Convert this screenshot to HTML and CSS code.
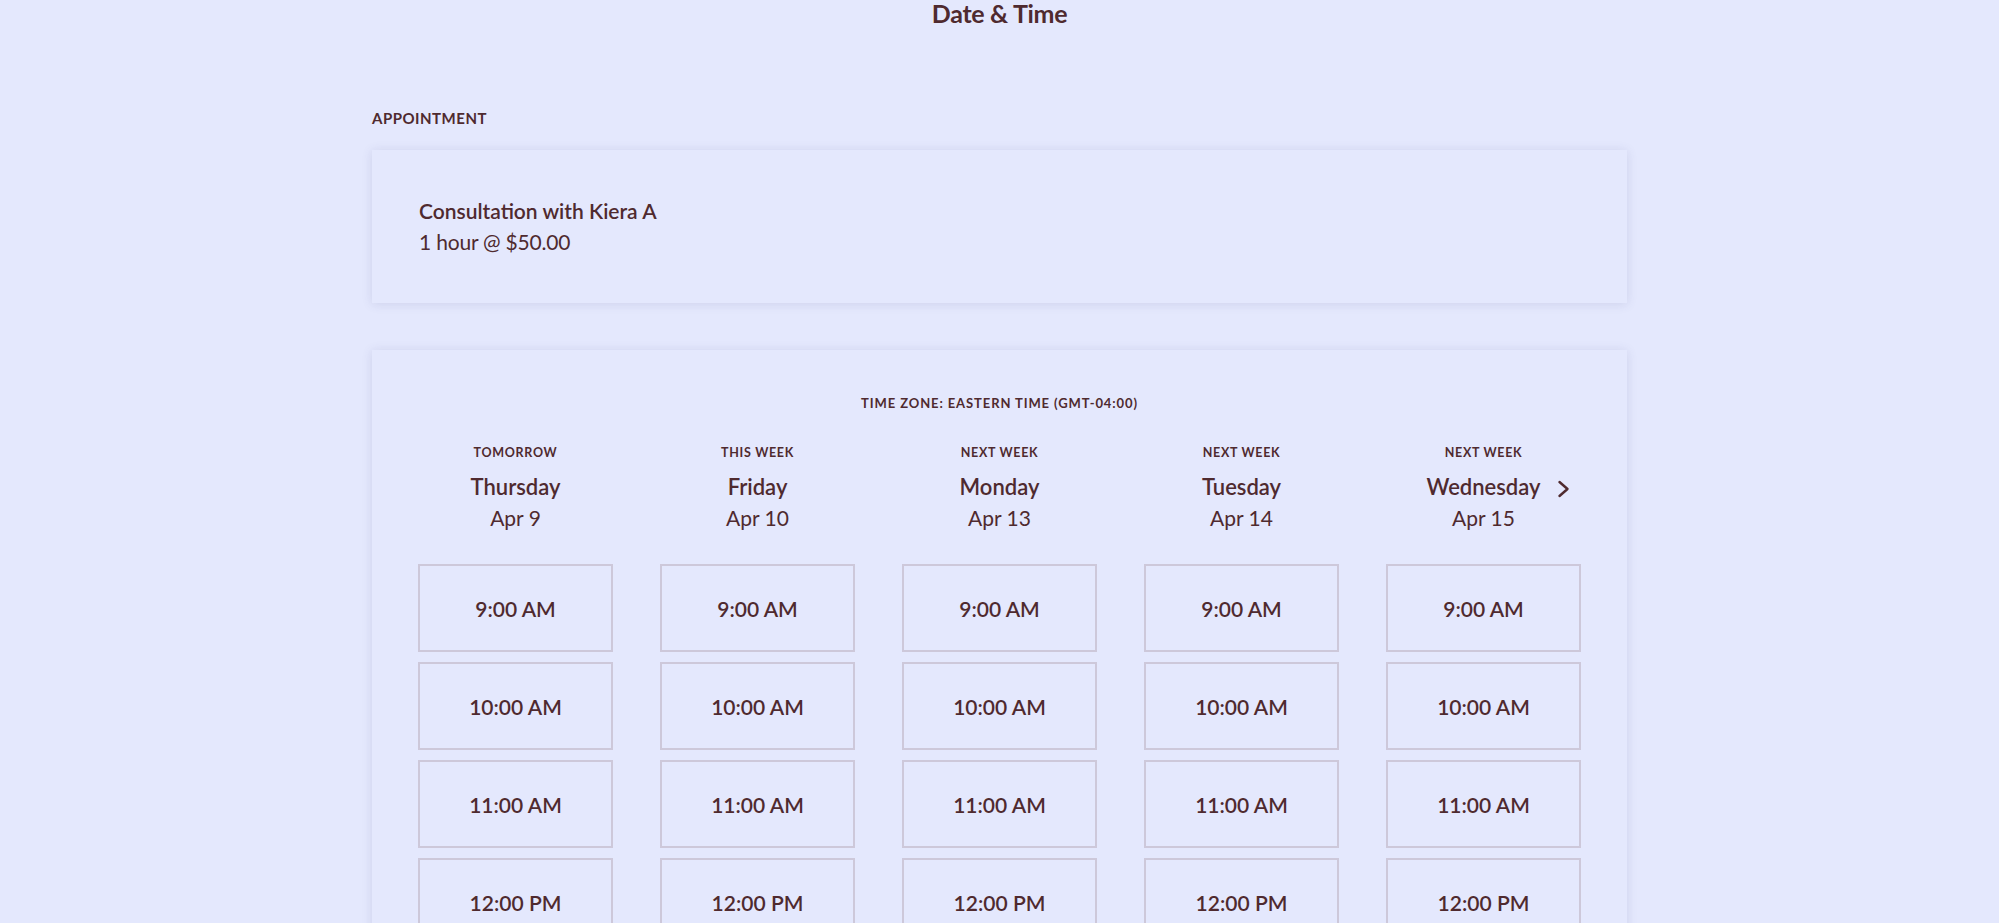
FILE: index.html
```html
<!DOCTYPE html>
<html lang="en">
<head>
  <meta charset="UTF-8" />
  <meta name="viewport" content="width=device-width, initial-scale=1" />
  <title>Date &amp; Time</title>
  <link rel="stylesheet" href="styles.css">
</head>
<body>

<h1 class="page-title">Date &amp; Time</h1>

<main>
  <div class="section-label">Appointment</div>
  <section class="card appointment">
    <div class="appt-name">Consultation with Kiera A</div>
    <div class="appt-meta">1 hour @ $50.00</div>
  </section>

  <section class="card calendar">
    <div class="timezone">Time Zone: Eastern Time (GMT-04:00)</div>

    <div class="days">
      <div class="day">
        <div class="day-head">
          <div class="day-tag">Tomorrow</div>
          <div class="day-name">Thursday</div>
          <div class="day-date">Apr 9</div>
        </div>
        <button class="slot">9:00 AM</button>
        <button class="slot">10:00 AM</button>
        <button class="slot">11:00 AM</button>
        <button class="slot">12:00 PM</button>
      </div>

      <div class="day">
        <div class="day-head">
          <div class="day-tag">This Week</div>
          <div class="day-name">Friday</div>
          <div class="day-date">Apr 10</div>
        </div>
        <button class="slot">9:00 AM</button>
        <button class="slot">10:00 AM</button>
        <button class="slot">11:00 AM</button>
        <button class="slot">12:00 PM</button>
      </div>

      <div class="day">
        <div class="day-head">
          <div class="day-tag">Next Week</div>
          <div class="day-name">Monday</div>
          <div class="day-date">Apr 13</div>
        </div>
        <button class="slot">9:00 AM</button>
        <button class="slot">10:00 AM</button>
        <button class="slot">11:00 AM</button>
        <button class="slot">12:00 PM</button>
      </div>

      <div class="day">
        <div class="day-head">
          <div class="day-tag">Next Week</div>
          <div class="day-name">Tuesday</div>
          <div class="day-date">Apr 14</div>
        </div>
        <button class="slot">9:00 AM</button>
        <button class="slot">10:00 AM</button>
        <button class="slot">11:00 AM</button>
        <button class="slot">12:00 PM</button>
      </div>

      <div class="day">
        <div class="day-head">
          <div class="day-tag">Next Week</div>
          <div class="day-name">Wednesday</div>
          <div class="day-date">Apr 15</div>
          <button class="next-btn" aria-label="Next days">
            <svg width="13" height="18" viewBox="0 0 13 18" fill="none" stroke="currentColor" stroke-width="2.4" stroke-linecap="round" stroke-linejoin="round">
              <path d="M2.5 2 L10.5 9 L2.5 16" />
            </svg>
          </button>
        </div>
        <button class="slot">9:00 AM</button>
        <button class="slot">10:00 AM</button>
        <button class="slot">11:00 AM</button>
        <button class="slot">12:00 PM</button>
      </div>
    </div>
  </section>
</main>

</body>
</html>
```

FILE: styles.css
```css
* { box-sizing: border-box; }

body {
  margin: 0;
  font-family: Lato, 'Noto Sans', sans-serif;
  background: #e4e8fd;
  color: #4f2a2f;
}

.page-title {
  margin: 0;
  text-align: center;
  font-size: 25px;
  line-height: 27px;
  font-weight: 700;
  letter-spacing: -0.3px;
}

main {
  max-width: 1255px;
  margin: 82px auto 0;
}

.section-label {
  font-size: 15px;
  line-height: 18px;
  font-weight: 700;
  letter-spacing: 0.5px;
  text-transform: uppercase;
  margin-bottom: 23px;
}

.card {
  background: #e4e8fd;
  box-shadow: 0 1px 10px rgba(70, 70, 130, 0.14);
}

.appointment {
  padding: 45px 47px 46px;
  font-size: 21px;
  line-height: 31px;
}

.appt-name {
  font-weight: 600;
}

.appt-meta {
  letter-spacing: -0.2px;
}

.calendar {
  margin-top: 47px;
  padding: 45px 46px 60px;
}

.timezone {
  text-align: center;
  font-size: 13px;
  line-height: 16px;
  font-weight: 700;
  letter-spacing: 0.9px;
  text-transform: uppercase;
}

.days {
  display: grid;
  grid-template-columns: repeat(5, 1fr);
  column-gap: 47px;
  margin-top: 34px;
}

.day {
  display: flex;
  flex-direction: column;
  gap: 10px;
}

.day-head {
  position: relative;
  text-align: center;
  margin-bottom: 21px;
}

.day-tag {
  font-size: 12.5px;
  line-height: 15px;
  font-weight: 700;
  letter-spacing: 0.7px;
  text-transform: uppercase;
  margin-bottom: 11px;
}

.day-name {
  font-size: 22px;
  line-height: 31px;
  font-weight: 600;
}

.day-date {
  font-size: 21px;
  line-height: 31px;
}

.next-btn {
  position: absolute;
  right: 11px;
  top: 35px;
  width: 13px;
  height: 18px;
  padding: 0;
  border: none;
  background: none;
  color: #4f2a2f;
  cursor: pointer;
}

.next-btn svg {
  display: block;
}

.slot {
  height: 88px;
  background: #e4e8fd;
  border: 2px solid #cdc8da;
  color: #4f2a2f;
  font-family: Lato, 'Noto Sans', sans-serif;
  font-size: 21px;
  font-weight: 600;
  cursor: pointer;
}

.slot:hover {
  background: #dde1f8;
}
```
